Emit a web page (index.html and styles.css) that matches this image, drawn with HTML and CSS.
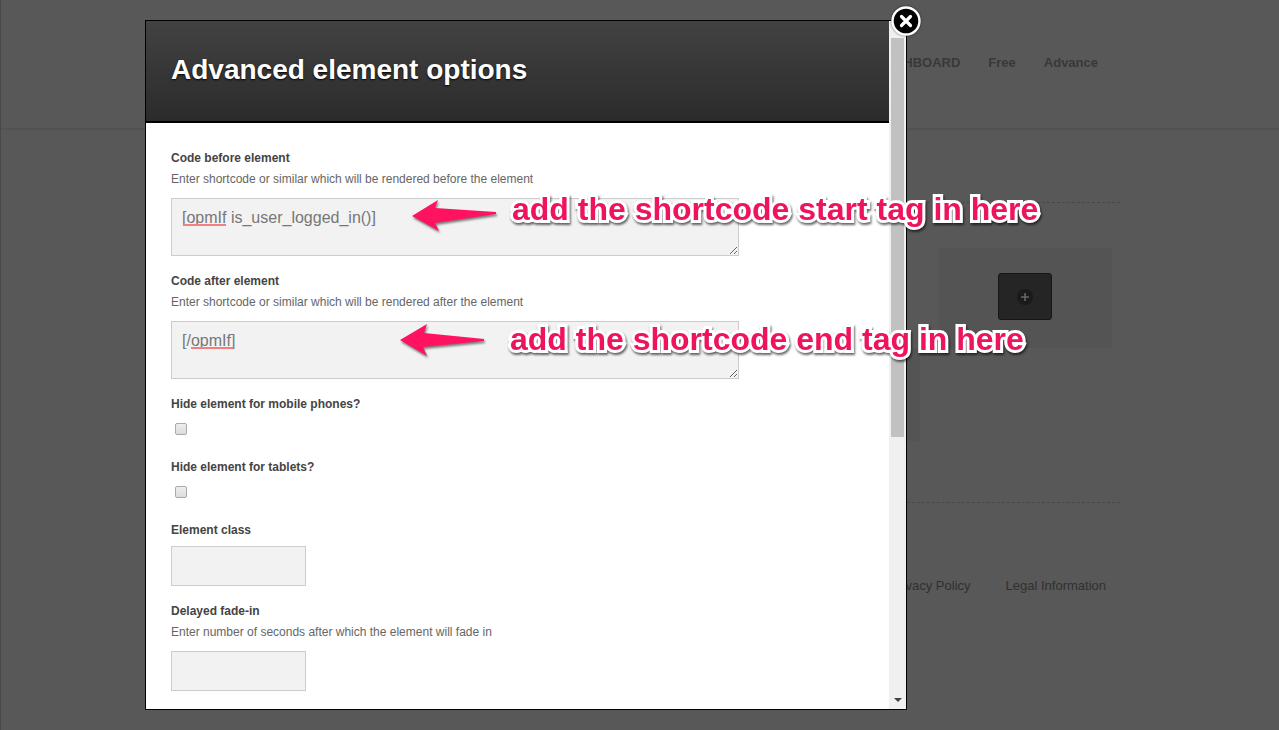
FILE: index.html
```html
<!DOCTYPE html>
<html lang="en">
<head>
  <meta charset="UTF-8">
  <title>Advanced element options</title>
  <meta name="viewport" content="width=device-width, initial-scale=1.0">
  <link rel="stylesheet" href="styles.css">
</head>
<body>
  <!-- page behind the dialog -->
  <header class="site-header">
    <nav class="container main-nav">
      <a href="#">DASHBOARD</a>
      <a href="#">Free</a>
      <a href="#">Advance</a>
    </nav>
  </header>
  <main class="container">
    <section class="editor">
      <div class="add-panel">
        <button type="button" class="add-button" aria-label="Add element">
          <svg width="20" height="20" viewBox="0 0 20 20">
            <circle cx="10" cy="10" r="8" fill="#1a1a1a"/>
            <path d="M10 6v8M6 10h8" stroke="#666" stroke-width="1.6"/>
          </svg>
        </button>
      </div>
      <div class="row-panel"></div>
    </section>
    <footer class="footer-nav">
      <a href="#">Privacy Policy</a>
      <a href="#">Legal Information</a>
    </footer>
  </main>

  <!-- dialog -->
  <div class="overlay">
    <div class="modal" role="dialog" aria-labelledby="modal-title">
      <div class="modal-main">
        <div class="modal-header">
          <h1 id="modal-title">Advanced element options</h1>
        </div>
        <form class="modal-body">
          <div class="field">
            <label for="code-before">Code before element</label>
            <p class="help">Enter shortcode or similar which will be rendered before the element</p>
            <div class="code-box">
              <textarea id="code-before" spellcheck="false">[opmIf is_user_logged_in()]</textarea>
              <span class="spell spell-before"></span>
              <div class="callout callout-start">
                <svg width="88" height="36" viewBox="0 0 88 36">
                  <path d="M1 25L27 9L24 17L85 21V23L24 32L28 40Z" fill="#ff1361"/>
                </svg>
                <span>add the shortcode start tag in here</span>
              </div>
            </div>
          </div>
          <div class="field">
            <label for="code-after">Code after element</label>
            <p class="help">Enter shortcode or similar which will be rendered after the element</p>
            <div class="code-box">
              <textarea id="code-after" spellcheck="false">[/opmIf]</textarea>
              <span class="spell spell-after"></span>
              <div class="callout callout-end">
                <svg width="88" height="36" viewBox="0 0 88 36">
                  <path d="M1 19L28 3L25 12L85 18V20L24 26L28 35Z" fill="#ff1361"/>
                </svg>
                <span>add the shortcode end tag in here</span>
              </div>
            </div>
          </div>
          <div class="field check-field">
            <label for="hide-mobile">Hide element for mobile phones?</label>
            <input type="checkbox" id="hide-mobile">
          </div>
          <div class="field check-field">
            <label for="hide-tablet">Hide element for tablets?</label>
            <input type="checkbox" id="hide-tablet">
          </div>
          <div class="field">
            <label for="element-class">Element class</label>
            <input type="text" id="element-class" class="after-label">
          </div>
          <div class="field">
            <label for="fade-in">Delayed fade-in</label>
            <p class="help">Enter number of seconds after which the element will fade in</p>
            <input type="text" id="fade-in">
          </div>
        </form>
      </div>
      <div class="scrollbar">
        <div class="scroll-thumb"></div>
        <div class="scroll-arrow"></div>
      </div>
      <button type="button" class="close" aria-label="Close">
        <svg width="32" height="32" viewBox="0 0 32 32">
          <circle cx="16" cy="16" r="13.5" fill="#000" stroke="#fff" stroke-width="2.4"/>
          <path d="M11.5 11.5L20.5 20.5M20.5 11.5L11.5 20.5" stroke="#fff" stroke-width="3.2" stroke-linecap="round"/>
        </svg>
      </button>
    </div>
  </div>
</body>
</html>
```
FILE: styles.css
```css
* {
  box-sizing: border-box;
}
body {
  margin: 0;
  min-height: 100vh;
  background: #585858;
  border-left: 1px solid #484848;
  font-family: "Liberation Sans", Arial, sans-serif;
  font-size: 12px;
  line-height: 21px;
  color: #444;
}
.container {
  max-width: 960px;
  margin: 0 auto;
}

/* page behind */
.site-header {
  height: 130px;
  border-bottom: 2px solid #525252;
}
.main-nav {
  display: flex;
  justify-content: flex-end;
  gap: 28px;
  padding: 52px 22px 0 0;
}
.main-nav a,
.footer-nav a {
  color: #303030;
  font-size: 13px;
  text-decoration: none;
}
.main-nav a {
  color: #383838;
  font-weight: bold;
}
.editor {
  display: flex;
  flex-direction: column;
  align-items: flex-end;
  height: 301px;
  margin-top: 72px;
  padding-top: 45px;
  border-top: 1px dashed #484848;
  border-bottom: 1px dashed #484848;
}
.add-panel {
  display: flex;
  justify-content: center;
  align-items: center;
  width: 173px;
  height: 100px;
  margin-right: 8px;
  padding: 0 2px 3px 0;
  background: #545454;
}
.add-button {
  display: flex;
  justify-content: center;
  align-items: center;
  width: 54px;
  height: 47px;
  padding: 0;
  background: #252525;
  border: 1px solid #161616;
  border-radius: 3px;
}
.row-panel {
  width: 173px;
  height: 93px;
  margin-right: 200px;
  background: #545454;
}
.footer-nav {
  display: flex;
  justify-content: flex-end;
  gap: 35px;
  padding: 72px 14px 0 0;
}

/* dialog */
.overlay {
  position: fixed;
  inset: 0;
  display: flex;
  padding: 20px 20px 20px 145px;
}
.modal {
  position: relative;
  display: flex;
  width: 100%;
  max-width: 762px;
  background: #fff;
  border: 1px solid #000;
}
.modal-main {
  flex: 1;
}
.modal-header {
  padding: 28px 25px 31px;
  background: linear-gradient(#424242, #2b2b2b);
  border-bottom: 2px solid #000;
}
.modal-header h1 {
  margin: 0;
  font-size: 28px;
  line-height: 41px;
  color: #fff;
  text-shadow: 0 1px 2px #000;
}
.modal-body {
  display: flex;
  flex-direction: column;
  gap: 15px;
  padding: 25px;
}
.field label {
  display: block;
  font-weight: bold;
}
.help {
  margin: 0 0 8px;
  color: #666;
}
.code-box {
  position: relative;
  width: 568px;
}
textarea,
input[type="text"] {
  display: block;
  background: #f2f2f2;
  border: 1px solid #ccc;
  border-radius: 0;
  color: #777;
  font-family: inherit;
  font-size: 16px;
  line-height: 20px;
}
textarea {
  width: 100%;
  height: 58px;
  padding: 9px 10px;
  overflow: hidden;
}
input[type="text"] {
  width: 135px;
  height: 40px;
  padding: 9px 10px;
}
input.after-label {
  margin-top: 5px;
}
.check-field {
  height: 48px;
}
input[type="checkbox"] {
  appearance: none;
  display: block;
  width: 12px;
  height: 12px;
  margin: 8px 4px;
  background: linear-gradient(#eee, #dcdcdc);
  border: 1px solid #aaa;
  border-radius: 2px;
}
.spell {
  position: absolute;
  top: 26px;
  height: 2px;
  background: #f08080;
}
.spell-before {
  left: 12px;
  width: 43px;
}
.spell-after {
  left: 20px;
  width: 42px;
}

/* notes over the dialog */
.callout {
  position: absolute;
  display: flex;
  color: #ed145b;
  font-size: 32px;
  font-weight: bold;
  line-height: 36px;
  white-space: nowrap;
  pointer-events: none;
}
.callout svg {
  overflow: visible;
  filter: drop-shadow(1px 2px 1px rgba(0, 0, 0, 0.5));
}
.callout span {
  paint-order: stroke fill;
  stroke-linejoin: round;
  -webkit-text-stroke: 6px #fff;
  filter: drop-shadow(1px 2px 1px rgba(0, 0, 0, 0.6));
}
.callout-start {
  top: -7px;
  left: 240px;
  gap: 13px;
}
.callout-end {
  top: 0;
  left: 228px;
  gap: 23px;
}

.scrollbar {
  display: flex;
  flex-direction: column;
  justify-content: space-between;
  align-items: center;
  width: 17px;
  padding: 17px 0 7px;
  background: #f0f0f0;
}
.scroll-thumb {
  width: 13px;
  height: 399px;
  background: #c1c1c1;
}
.scroll-arrow {
  border: 4px solid transparent;
  border-top-color: #444;
  border-bottom: 0;
}
.close {
  position: absolute;
  top: -16px;
  right: -16px;
  width: 32px;
  height: 32px;
  padding: 0;
  background: none;
  border: 0;
  cursor: pointer;
}
.close svg {
  display: block;
  filter: drop-shadow(0 0 1px rgba(0, 0, 0, 0.6));
}
```
